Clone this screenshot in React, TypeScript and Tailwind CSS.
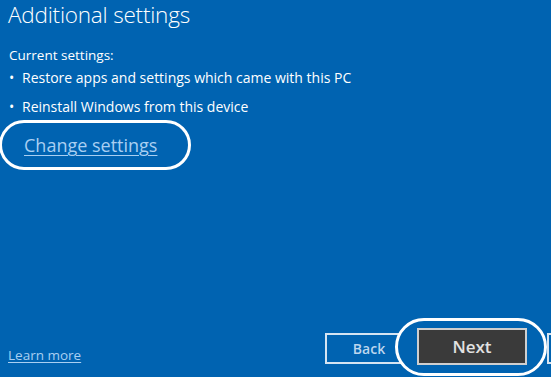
import React from "react";

const bullets = [
  "Restore apps and settings which came with this PC",
  "Reinstall Windows from this device",
];

const App = () => {
  return (
    <div className="w-[551px] h-[377px] overflow-hidden bg-[#0063b1] text-white flex flex-col font-['Open_Sans','Noto_Sans',sans-serif]">
      {/* Header */}
      <h1 className="pl-[8px] pt-[1px] text-[22.5px] leading-[28px] font-light tracking-[-0.2px]">
        Additional settings
      </h1>

      {/* Current settings */}
      <p className="pl-[9px] mt-[17px] text-[13.5px] leading-[18px]">
        Current settings:
      </p>
      <ul className="pl-[9px]">
        {bullets.map((b, i) => (
          <li
            key={i}
            className={`flex text-[14px] leading-[18px] ${i === 0 ? "mt-[5px]" : "mt-[11px]"}`}
          >
            <span className="w-[13px] shrink-0">•</span>
            <span>{b}</span>
          </li>
        ))}
      </ul>

      {/* Change settings link, circled */}
      <div className="mt-[4px] -ml-[1px] w-[192px] h-[50px] border-[3px] border-white rounded-full flex items-center pl-[22px]">
        <a className="text-[18px] leading-[22px] text-[#a9cff2] underline underline-offset-[3px] decoration-1 cursor-pointer">
          Change settings
        </a>
      </div>

      {/* Bottom row */}
      <div className="mt-auto mb-[1px] h-[58px] flex items-start pl-[8px]">
        <div className="w-[317px] shrink-0 pt-[24px]">
          <a className="text-[13.5px] leading-[18px] text-[#a9cff2] underline underline-offset-[2px] cursor-pointer">
            Learn more
          </a>
        </div>
        <button className="mt-[15px] w-[88px] h-[31px] shrink-0 border-2 border-[#d5e4f2] text-[14px] font-semibold text-[#bcd6ee] flex items-center justify-center">
          Back
        </button>
        <div className="relative mt-[10px] ml-[4px] shrink-0 z-10">
          <div className="absolute -left-[22px] -right-[20px] -top-[10px] -bottom-[11px] rounded-full border-[3px] border-white bg-[#0063b1]" />
          <button className="relative w-[110px] h-[37px] bg-[#3a3a3a] border-2 border-[#cfcfcf] text-[17px] font-semibold text-[#e2e2e2] flex items-center justify-center">
            Next
          </button>
        </div>
        {/* edge of the next button, mostly off-screen */}
        <div className="mt-[15px] ml-[20px] w-[110px] h-[31px] shrink-0 border-2 border-[#d5e4f2]" />
      </div>
    </div>
  );
};

export default App;
